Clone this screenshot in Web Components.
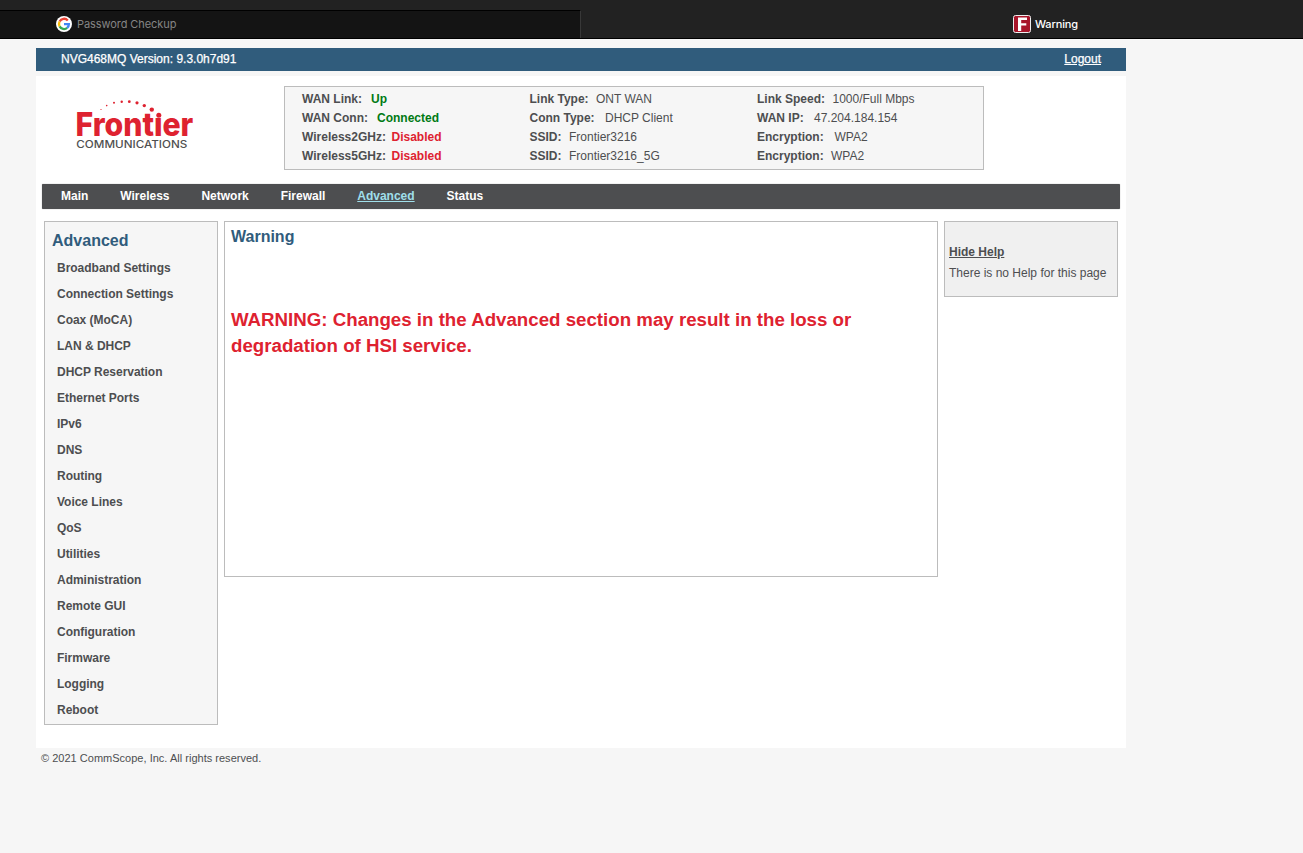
<!DOCTYPE html>
<html lang="en">
<head>
<meta charset="utf-8">
<title>Warning</title>
<style>
html,body{margin:0;height:100%;background:#f6f6f6}
body{font-family:"Liberation Sans",Arial,sans-serif;font-size:12px;color:#4d4e50;overflow:hidden}
</style>
</head>
<body>
<router-app></router-app>
<script>
const define = (name, html) => customElements.define(name, class extends HTMLElement {
  connectedCallback() {
    if (this.shadowRoot) return;
    const t = document.createElement('template');
    t.innerHTML = typeof html === 'function' ? html(this) : html;
    this.attachShadow({mode: 'open'}).append(t.content.cloneNode(true));
  }
});

define('tab-strip', `
<style>
:host{display:flex;height:39px;box-sizing:border-box;background:#222;border-bottom:1px solid #000;font:11px/16px Inter,sans-serif}
.tab{display:flex;align-items:center;box-sizing:border-box}
.inactive{width:581px;height:28px;margin-top:10px;padding:0 0 1px 56px;background:#141414;border-top:1px solid #000;border-right:1px solid #383838;color:#858585}
.inactive svg{margin-right:5px}
.inactive span{letter-spacing:-.07px}
.active{flex:1;margin-top:10px;height:28px;justify-content:center;color:#fff;padding-left:207px}
.active svg{margin-right:4px}
.active span{font-weight:500;letter-spacing:-.12px}
</style>
<div class="tab inactive">
<svg width="16" height="16" viewBox="0 0 16 16"><circle cx="8" cy="8" r="8" fill="#fff"/>
<g fill="none" stroke-width="2.3"><path d="M11.8 4.4A5 5 0 0 0 3.6 5.6" stroke="#ea4335"/><path d="M3.6 5.6A5 5 0 0 0 3.6 10.4" stroke="#fbbc05"/><path d="M3.6 10.4A5 5 0 0 0 11.2 11.9" stroke="#34a853"/><path d="M11.2 11.9A5 5 0 0 0 12.9 8.1H8" stroke="#4285f4"/></g></svg>
<span>Password Checkup</span></div>
<div class="tab active">
<svg width="18" height="18" viewBox="0 0 18 18"><rect x=".5" y=".5" width="17" height="17" rx="2" fill="#a8152a" stroke="#eee"/><path d="M5 2.5h9v2.6H8.2v3.1h5.1v2.4H8.2V16H5z" fill="#fff"/></svg>
<span>Warning</span></div>`);

define('version-bar', `
<style>
:host{display:flex;justify-content:space-between;height:23px;box-sizing:border-box;padding:0 25px;background:#305c7c;color:#fff;line-height:22px;-webkit-text-stroke:.25px #fff}
a{text-decoration:underline}
</style><slot></slot><a>Logout</a>`);

define('brand-logo', `
<style>:host{display:block;width:120px;height:54px}svg{display:block;overflow:visible}</style>
<svg width="120" height="54" viewBox="75 97 120 54">
<g fill="#de2230">
<text x="75.5" y="135.8" font-family="Inter" font-weight="800" font-size="32.8" textLength="117.8" lengthAdjust="spacingAndGlyphs">Front\u0131er</text>
<circle cx="158.8" cy="115.3" r="2.5"/><circle cx="151.8" cy="109.6" r="2.2"/><circle cx="144.3" cy="105.6" r="1.7"/><circle cx="137" cy="102.8" r="1.6"/><circle cx="129.3" cy="101.7" r="1.4"/><circle cx="121.7" cy="101.7" r="1.2"/><circle cx="114" cy="102.7" r="1"/><circle cx="106.7" cy="105.6" r=".8"/><circle cx="101" cy="109.5" r=".6"/></g>
<text x="76.3" y="147.6" font-family="Inter" font-weight="500" font-size="9.8" fill="#505050" textLength="111" lengthAdjust="spacingAndGlyphs">COMMUNICATIONS</text>
</svg>`);

define('status-item', el => `
<style>
:host{display:flex;line-height:19px;height:19px;white-space:nowrap}
b{width:${el.getAttribute('gap')}px;flex:none}
:host([state]) span{font-weight:700;color:#de2230}
:host([state=ok]) span{color:#007a14}
</style><b>${el.getAttribute('label')}:</b><span><slot></slot></span>`);

define('status-panel', `
<style>:host{display:grid;grid-template-columns:227.5px 227.5px 1fr;grid-template-rows:repeat(4,19px);grid-auto-flow:column;box-sizing:border-box;width:700px;height:84px;padding:3px 0 0 17px;border:1px solid #bcbcbc;background:#f6f6f6}</style><slot></slot>`);

define('main-nav', `
<style>
:host{display:flex;gap:31.92px;height:25px;padding-left:19px;line-height:24px;background:#4d4e50;box-shadow:0 0 1px #777;border-radius:1px;font-weight:700;color:#fff}
::slotted([active]){color:#9fdeea;text-decoration:underline}
</style><slot></slot>`);

define('side-menu', `
<style>
:host{display:block;box-sizing:border-box;width:174px;height:504px;border:1px solid #bcbcbc;background:#f6f6f6;padding:8px 0 0 7px}
h2{margin:0 0 4px;font-size:16px;line-height:21px;color:#305c7c}
nav{display:flex;flex-direction:column;padding-left:5px;font-weight:700;line-height:26px;letter-spacing:-.02px}
</style><h2>Advanced</h2><nav><slot></slot></nav>`);

define('warning-panel', `
<style>
:host{display:block;box-sizing:border-box;width:714px;height:356px;border:1px solid #bcbcbc;background:#fff;padding:4px 6px}
h2{margin:0;font-size:16px;line-height:21px;color:#305c7c}
p{margin:60px 0 0;font-size:18.7px;line-height:26px;font-weight:700;color:#de2230}
</style><h2>Warning</h2><p><slot></slot></p>`);

define('help-panel', `
<style>
:host{display:block;box-sizing:border-box;width:174px;height:76px;border:1px solid #bcbcbc;background:#f0f0f0;padding:20px 4px 0;line-height:21px;white-space:nowrap}
a{display:block;font-weight:700;text-decoration:underline}
</style><a>Hide Help</a><slot></slot>`);

define('router-app', `
<style>
:host{display:block}
.page{width:1090px;margin:9px 0 0 36px}
main{box-sizing:border-box;height:672px;margin-top:5px;background:#fff;padding:10px 6px 0}
header{display:flex;height:98px}
brand-logo{margin:11px 89px 0 33px}
.columns{display:flex;align-items:flex-start;gap:6px;margin:12px 0 0 2px}
footer{padding-left:5px;font-size:11px;line-height:20px;letter-spacing:.015px}
</style>
<tab-strip></tab-strip>
<div class="page">
<version-bar><span>NVG468MQ Version: 9.3.0h7d91</span></version-bar>
<main>
<header><brand-logo></brand-logo>
<status-panel>
<status-item label="WAN Link" gap="69" state="ok">Up</status-item>
<status-item label="WAN Conn" gap="75" state="ok">Connected</status-item>
<status-item label="Wireless2GHz" gap="89.5" state="off">Disabled</status-item>
<status-item label="Wireless5GHz" gap="89.5" state="off">Disabled</status-item>
<status-item label="Link Type" gap="66.5">ONT WAN</status-item>
<status-item label="Conn Type" gap="75.5">DHCP Client</status-item>
<status-item label="SSID" gap="39.5">Frontier3216</status-item>
<status-item label="SSID" gap="39.5">Frontier3216_5G</status-item>
<status-item label="Link Speed" gap="75.5">1000/Full Mbps</status-item>
<status-item label="WAN IP" gap="57">47.204.184.154</status-item>
<status-item label="Encryption" gap="77.5">WPA2</status-item>
<status-item label="Encryption" gap="74">WPA2</status-item>
</status-panel></header>
<main-nav><span>Main</span><span>Wireless</span><span>Network</span><span>Firewall</span><span active>Advanced</span><span>Status</span></main-nav>
<div class="columns">
<side-menu>${['Broadband Settings','Connection Settings','Coax (MoCA)','LAN &amp; DHCP','DHCP Reservation','Ethernet Ports','IPv6','DNS','Routing','Voice Lines','QoS','Utilities','Administration','Remote GUI','Configuration','Firmware','Logging','Reboot'].map(s => `<span>${s}</span>`).join('')}</side-menu>
<warning-panel>WARNING: Changes in the Advanced section may result in the loss or degradation of HSI service.</warning-panel>
<help-panel>There is no Help for this page</help-panel>
</div>
</main>
<footer>© 2021 CommScope, Inc. All rights reserved.</footer>
</div>`);
</script>
</body>
</html>
